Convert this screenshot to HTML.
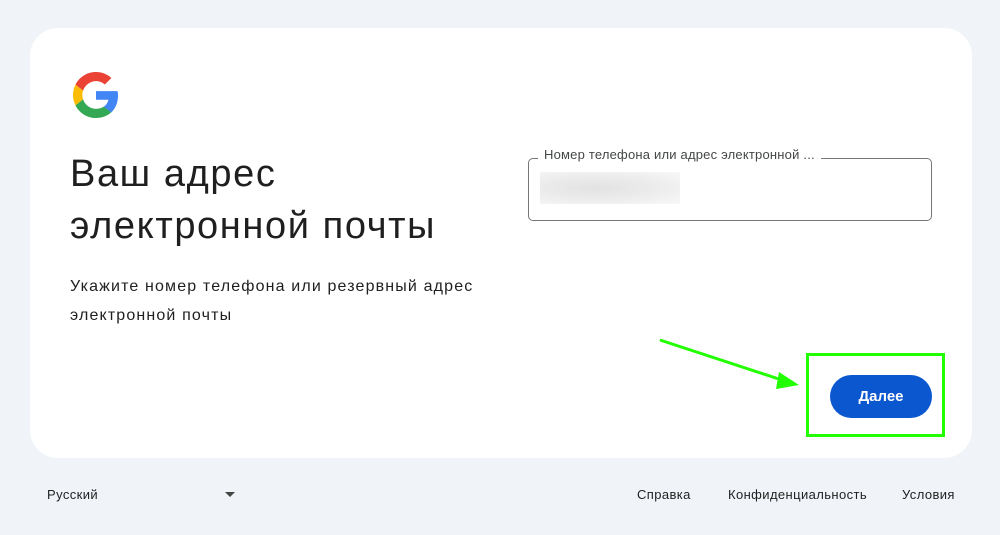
<!DOCTYPE html><html><head><meta charset="utf-8"><style>
body{margin:0;width:1000px;height:535px;background:#f0f4f9;font-family:"Liberation Sans",sans-serif;position:relative;overflow:hidden;color:#1f1f1f}
.card{position:absolute;left:30px;top:28px;width:942px;height:430px;background:#fff;border-radius:28px}
.a{position:absolute}
h1{position:absolute;left:70px;top:148px;margin:0;font-weight:400;font-size:38px;letter-spacing:1.6px;line-height:52px;color:#1f1f1f}
.sub{left:70px;top:272px;font-size:16px;letter-spacing:1.15px;line-height:29px;color:#1f1f1f}
.inp{left:528px;top:158px;width:402px;height:61px;border:1px solid #747775;border-radius:5px}
.lbl{left:538px;top:147px;background:#fff;padding:0 6px;font-size:13px;letter-spacing:0.2px;color:#444746}
.blur{left:540px;top:172px;width:140px;height:32px;background:radial-gradient(ellipse at 40% 50%,#e2e2e2 0%,#ececec 50%,#f8f8f8 100%)}
.btn{left:830px;top:375px;width:102px;height:43px;background:#0b57d0;border-radius:22px;color:#fff;font-weight:700;font-size:15px;text-align:center;line-height:43px}
.ft{top:487px;font-size:13px;letter-spacing:0.4px;color:#1f1f1f}
</style></head><body>
<div class="card"></div>
<svg class="a" style="left:73px;top:72px" width="46" height="46" viewBox="0 0 48 48"><path fill="#EA4335" d="M24 9.5c3.54 0 6.71 1.22 9.21 3.6l6.85-6.85C35.9 2.38 30.47 0 24 0 14.620 0 6.51 5.38 2.56 13.22l7.98 6.19C12.43 13.72 17.74 9.5 24 9.5z"/><path fill="#4285F4" d="M46.98 24.55c0-1.57-.15-3.09-.38-4.55H24v9.02h12.94c-.58 2.96-2.26 5.48-4.78 7.18l7.730 6c4.51-4.18 7.09-10.36 7.09-17.650z"/><path fill="#FBBC05" d="M10.53 28.59c-.48-1.450-.76-2.99-.76-4.59s.27-3.14.76-4.59l-7.98-6.19C.92 16.46 0 20.12 0 24c0 3.88.92 7.54 2.56 10.78l7.97-6.190z"/><path fill="#34A853" d="M24 48c6.48 0 11.93-2.13 15.89-5.81l-7.73-6c-2.15 1.450-4.92 2.3-8.16 2.3-6.26 0-11.57-4.22-13.47-9.91l-7.98 6.19C6.51 42.62 14.62 48 24 48z"/></svg>
<h1>Ваш адрес<br>электронной почты</h1>
<div class="a sub">Укажите номер телефона или резервный адрес<br>электронной почты</div>
<div class="a inp"></div>
<div class="a lbl">Номер телефона или адрес электронной ...</div>
<div class="a blur"></div>
<div class="a btn">Далее</div>
<div class="a" style="left:806px;top:353px;width:133px;height:78px;border:3px solid #22ff00"></div>
<svg class="a" style="left:0;top:0" width="1000" height="535"><line x1="660" y1="340" x2="785" y2="381" stroke="#22ff00" stroke-width="3"/><polygon points="799,385 779,372 776,389" fill="#22ff00"/></svg>
<div class="a ft" style="left:47px">Русский</div>
<div class="a" style="left:225px;top:492px;width:0;height:0;border-left:5px solid transparent;border-right:5px solid transparent;border-top:5px solid #444"></div>
<div class="a ft" style="left:637px">Справка</div>
<div class="a ft" style="left:728px">Конфиденциальность</div>
<div class="a ft" style="left:902px">Условия</div>
</body></html>
